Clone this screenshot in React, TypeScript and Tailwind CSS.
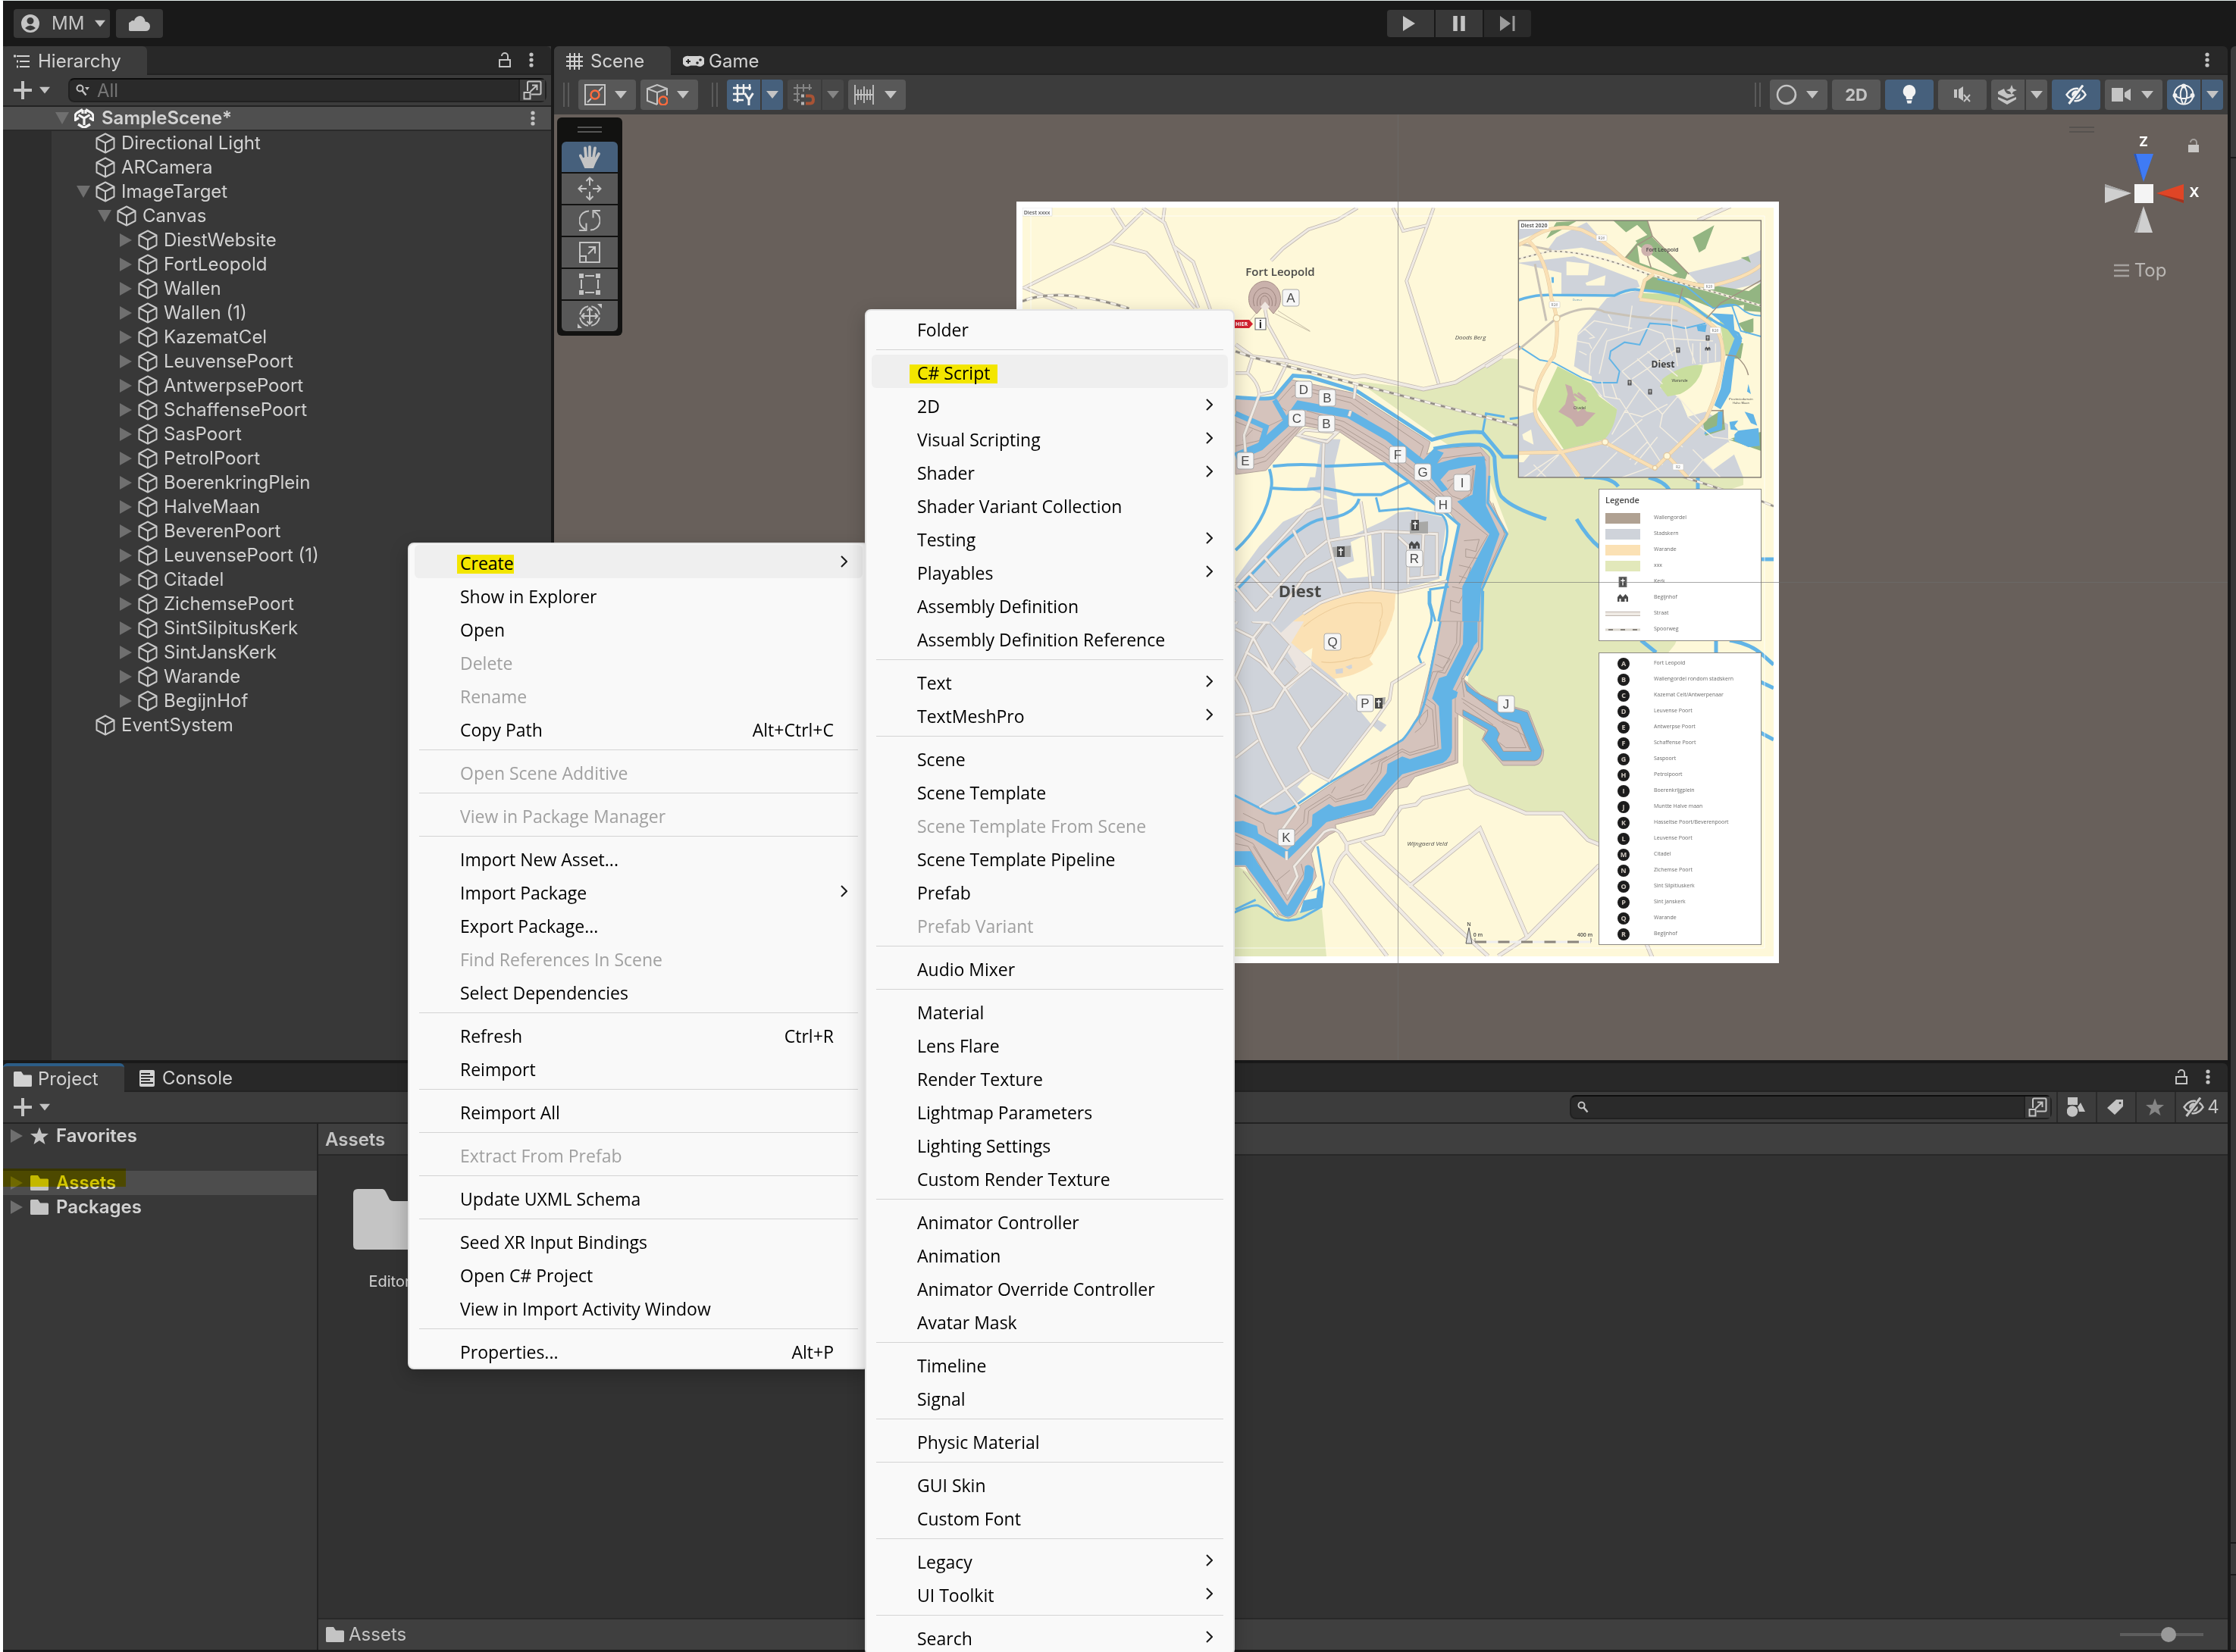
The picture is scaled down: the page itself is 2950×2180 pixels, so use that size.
import React from "react";
import clsx from "clsx";

type Kids = { children?: React.ReactNode };

/* ---------- icons ---------- */

function Icon({ w, h, vb, className, children }: Kids & { w: number; h: number; vb?: string; className?: string }) {
  return (
    <svg width={w} height={h} viewBox={vb ?? `0 0 ${w} ${h}`} className={clsx("shrink-0", className)} fill="none" stroke="currentColor" strokeWidth={2} aria-hidden="true">
      {children}
    </svg>
  );
}

const Caret = ({ className }: { className?: string }) => (
  <Icon w={16} h={10} className={className}>
    <path d="M0 0H16L8 10Z" fill="currentColor" stroke="none" />
  </Icon>
);

const Fold = ({ open }: { open?: boolean }) =>
  open ? (
    <Icon w={18} h={16} className="text-[#6f6f6f]">
      <path d="M0 0H18L9 16Z" fill="currentColor" stroke="none" />
    </Icon>
  ) : (
    <Icon w={16} h={18} className="text-[#6f6f6f]">
      <path d="M0 0L16 9L0 18Z" fill="currentColor" stroke="none" />
    </Icon>
  );

const Cube = () => (
  <Icon w={26} h={28}>
    <path d="M13 1.5L24.5 7.5V20.5L13 26.5L1.5 20.5V7.5ZM1.5 7.5L13 13.5L24.5 7.5M13 13.5V26.5" strokeLinejoin="round" />
  </Icon>
);

const Dots = () => (
  <Icon w={6} h={20}>
    <g fill="currentColor" stroke="none">
      <circle cx="3" cy="3" r="2.6" />
      <circle cx="3" cy="10" r="2.6" />
      <circle cx="3" cy="17" r="2.6" />
    </g>
  </Icon>
);

const Lock = () => (
  <Icon w={16} h={20}>
    <path d="M1 10H15V19H1ZM12 10V5A4 4 0 0 0 4 5" />
  </Icon>
);

const Plus = () => (
  <Icon w={24} h={24}>
    <path d="M12 0V24M0 12H24" strokeWidth={4} />
  </Icon>
);

const Folder = ({ className }: { className?: string }) => (
  <Icon w={24} h={20} className={className}>
    <path d="M0 1.5Q0 0 1.5 0H10L13 4.500H22.500Q24 4.500 24 6V18.500Q24 20 22.500 20H1.500Q0 20 0 18.500Z" fill="currentColor" stroke="none" />
  </Icon>
);

const Star = ({ className }: { className?: string }) => (
  <Icon w={24} h={24} className={className}>
    <path d="M12 0.500L15 8.800L24 9L17 14.400L19.500 23L12 18L4.500 23L7 14.400L0 9L9 8.800Z" fill="currentColor" stroke="none" />
  </Icon>
);

const OpenWindow = () => (
  <Icon w={25} h={26}>
    <path d="M6 14V3Q6 1.500 7.500 1.500H22Q23.500 1.500 23.500 3V17Q23.500 18.500 22 18.500H11M1.500 16H9.500V24.500H1.500ZM9.500 15L18 7M12 6.500H18.500V13" />
  </Icon>
);

const Magnifier = ({ caret }: { caret?: boolean }) => (
  <Icon w={18} h={16}>
    <circle cx="5.500" cy="5.500" r="4" />
    <path d="M8.500 8.500L13.500 14.500" strokeWidth={2.500} />
    {caret && <path d="M12 4H18L15 8Z" fill="currentColor" stroke="none" />}
  </Icon>
);

const EyeOff = () => (
  <Icon w={28} h={26}>
    <path d="M7.500 18.500Q3.500 16.500 1.500 13Q8 3.500 17 5M21.500 7Q25 9.500 26.500 13Q20 22.500 11.500 21" strokeWidth={2.500} />
    <path d="M9 15.500A5.500 5.500 0 0 1 16.500 8ZM13 18.500L19.500 11.500A5.500 5.500 0 0 1 13 18.500Z" fill="currentColor" stroke="none" />
    <path d="M23 0.500L4.500 25" strokeWidth={3} />
  </Icon>
);

/* ---------- shared controls ---------- */

const Grip = () => (
  <div className="flex h-8 w-2 shrink-0 justify-between">
    <div className="w-0.5 bg-[#5a5a5a]" />
    <div className="w-0.5 bg-[#5a5a5a]" />
  </div>
);

function Tool({ label, tone = "normal", className, children }: Kids & { label: string; tone?: "normal" | "active" | "off"; className?: string }) {
  return (
    <button
      aria-label={label}
      className={clsx(
        "flex h-10 shrink-0 items-center justify-center",
        tone === "normal" && "bg-[#585858] text-[#c4c4c4]",
        tone === "active" && "bg-[#46607c] text-[#f2f2f2]",
        tone === "off" && "bg-[#474747] text-[#858585]",
        className
      )}
    >
      {children}
    </button>
  );
}

function SplitTool({ label, tone, caretTone, children }: Kids & { label: string; tone?: "normal" | "active" | "off"; caretTone?: string }) {
  return (
    <div className="flex gap-0.5">
      <Tool label={label} tone={tone} className="w-11 rounded-l-sm">
        {children}
      </Tool>
      <Tool label={`${label} options`} tone={tone} className="w-7 rounded-r-sm">
        <Caret className={caretTone ?? "text-[#c4c4c4]"} />
      </Tool>
    </div>
  );
}

function Tab({ label, active, focused, icon, className }: { label: string; active?: boolean; focused?: boolean; icon: React.ReactNode; className: string }) {
  return (
    <button
      role="tab"
      aria-selected={!!active}
      className={clsx(
        "flex h-full items-center text-2xl text-[#d2d2d2]",
        active ? "rounded-t-md bg-[#3c3c3c]" : "border-b-2 border-[#232323] pt-1",
        focused ? "border-t-4 border-[#2c5d87]" : active && "pt-0.5",
        className
      )}
    >
      {icon}
      <span>{label}</span>
    </button>
  );
}

/* ---------- hierarchy ---------- */

type Node = { name: string; depth: 1 | 2 | 3; fold?: "open" | "closed" };

const nodes: Node[] = [
  { name: "Directional Light", depth: 1 },
  { name: "ARCamera", depth: 1 },
  { name: "ImageTarget", depth: 1, fold: "open" },
  { name: "Canvas", depth: 2, fold: "open" },
  ...[
    "DiestWebsite", "FortLeopold", "Wallen", "Wallen (1)", "KazematCel", "LeuvensePoort", "AntwerpsePoort",
    "SchaffensePoort", "SasPoort", "PetrolPoort", "BoerenkringPlein", "HalveMaan", "BeverenPoort",
    "LeuvensePoort (1)", "Citadel", "ZichemsePoort", "SintSilpitusKerk", "SintJansKerk", "Warande", "BegijnHof",
  ].map((name) => ({ name, depth: 3 as const, fold: "closed" as const })),
  { name: "EventSystem", depth: 1 },
];

function Hierarchy() {
  return (
    <section className="flex w-[723px] shrink-0 flex-col bg-[#383838]">
      <div className="flex h-[38px] items-stretch rounded-t-md bg-[#282828]">
        <Tab
          label="Hierarchy"
          active
          className="w-[190px] gap-2.5 pl-3.5"
          icon={
            <Icon w={22} h={18}>
              <path d="M4 2H21M8 9H21M8 16H21" strokeWidth={2.200} />
              <path d="M0 2H3M4 9H6M4 16H6" strokeWidth={3} />
            </Icon>
          }
        />
        <div className="flex grow items-center justify-end gap-6 border-b-2 border-[#232323] pr-[23px] text-[#c4c4c4]">
          <button aria-label="Lock"><Lock /></button>
          <button aria-label="Hierarchy menu"><Dots /></button>
        </div>
      </div>
      <div className="flex h-[42px] items-center border-b-2 border-[#232323] bg-[#3c3c3c] pl-3.5 pr-1.5 text-[#c4c4c4]">
        <button aria-label="Create object" className="flex w-[72px] items-center gap-2.5">
          <Plus />
          <Caret className="w-3.5" />
        </button>
        <label className="flex h-8 grow items-center rounded-lg border-2 border-[#212121] border-t-[#0d0d0d] bg-[#2a2a2a] pl-2">
          <Magnifier caret />
          <input aria-label="Search hierarchy" placeholder="All" className="ml-2.5 h-full min-w-0 grow bg-transparent text-2xl outline-none placeholder:text-[#767676]" />
          <span className="flex h-full items-center border-l-2 border-[#212121] bg-[#3c3c3c] px-1"><OpenWindow /></span>
        </label>
      </div>
      <div className="flex h-8 items-center border-b-2 border-[#2a2a2a] bg-[#4f4f4f] pl-16 text-[#d2d2d2]">
        <span className="flex w-7 justify-center"><Fold open /></span>
        <Icon w={26} h={26} className="ml-0.5 text-[#f4f4f4]">
          <path d="M11 1.500L4 5.500Q1 7.500 1 11V17M15 1.500L22 5.500Q25 7.500 25 11V17M5 21L11 24.500Q13 25.500 15 24.500L21 21M13 13V22M13 13L5.500 8.500M13 13L20.500 8.500M11 2V7M15 2V7M1.500 15L6 12.500M24.500 15L20 12.500" strokeWidth={3.200} />
        </Icon>
        <span className="ml-2.5 grow text-2xl leading-7 font-semibold">SampleScene*</span>
        <button aria-label="Scene menu" className="mr-[21px] text-[#c4c4c4]"><Dots /></button>
      </div>
      <div className="flex grow">
        <div className="w-16 shrink-0 bg-[#2d2d2d]" />
        <ul role="tree" aria-label="Scene objects" className="grow">
          {nodes.map((n) => (
            <li
              key={n.name}
              role="treeitem"
              aria-selected={false}
              className={clsx("flex h-8 items-center text-2xl text-[#d2d2d2]", n.depth === 1 && "pl-7", n.depth === 2 && "pl-14", n.depth === 3 && "pl-[84px]")}
            >
              <span className="flex w-7 justify-center">{n.fold && <Fold open={n.fold === "open"} />}</span>
              <span className="mr-2 ml-0.5 text-[#c8c8c8]"><Cube /></span>
              {n.name}
            </li>
          ))}
        </ul>
      </div>
    </section>
  );
}

/* ---------- map ---------- */

const WATER = "#62b4e6";
const TOWN = "#cfd3da";
const WALL = "#d5c3bc";
const GREEN = "#e2e8ba";
const CREAM = "#fef8d9";

const Roads = ({ d, w = 4 }: { d: string; w?: number }) => (
  <>
    <path d={d} stroke="#bfb6ae" strokeWidth={w + 1.500} />
    <path d={d} stroke="#efeae4" strokeWidth={w} />
  </>
);

const Orange = ({ d, w = 4 }: { d: string; w?: number }) => (
  <>
    <path d={d} stroke="#e2c9a0" strokeWidth={w + 1} />
    <path d={d} stroke="#fae0b5" strokeWidth={w} />
  </>
);

const Rail = ({ d, w = 2.500 }: { d: string; w?: number }) => (
  <>
    <path d={d} stroke="#c2bcb0" strokeWidth={w + 1.500} />
    <path d={d} stroke="#f6f2ea" strokeWidth={w} />
    <path d={d} stroke="#8f8a82" strokeWidth={w} strokeDasharray="6 8" />
  </>
);

const Church = ({ x, y, s = 1 }: { x: number; y: number; s?: number }) => (
  <g transform={`translate(${x} ${y}) scale(${s})`}>
    <rect x="-5" y="-7" width="10" height="14" fill="#4a4a4a" />
    <path d="M0 -5V5M-3 -2H3" stroke="#fff" strokeWidth="1.500" />
  </g>
);

const Houses = ({ x, y, s = 1 }: { x: number; y: number; s?: number }) => (
  <path transform={`translate(${x} ${y}) scale(${s})`} d="M-7 5V-1L-3.500 -5L0 -1L3.500 -5L7 -1V5H4.500V1H2.500V5H-2.500V1H-4.500V5Z" fill="#4a4a4a" stroke="none" />
);

const pins: [string, number, number][] = [
  ["A", 1703, 393], ["D", 1720, 514], ["B", 1751, 525], ["C", 1711, 552], ["B", 1750, 559], ["E", 1643, 608],
  ["F", 1844, 600], ["G", 1877, 623], ["I", 1929, 637], ["H", 1904, 666], ["R", 1866, 737], ["Q", 1758, 847],
  ["P", 1801, 928], ["J", 1987, 929], ["K", 1697, 1105],
];

const shields: [string, number, number][] = [
  ["R26", 2113, 314], ["R26", 2051, 402], ["R29", 2255, 378], ["R26", 2263, 436], ["R2", 2214, 616],
];

function MapDrawing() {
  return (
    <svg viewBox="1341 266 1006 1005" width={1006} height={1005} fill="none" className="block" aria-label="Map of Diest" role="img">
      <defs>
        <clipPath id="sheet"><rect x="1349" y="274" width="991" height="988" /></clipPath>
        <clipPath id="inset"><rect x="130" y="93" width="960" height="1017" /></clipPath>
      </defs>
      <rect x="1341" y="266" width="1006" height="1005" fill="#fff" />
      <g clipPath="url(#sheet)">
        <rect x="1349" y="274" width="991" height="988" fill={CREAM} />

        {/* green belt */}
        <path d="M1791 503L1878 514L1920 506L1975 475Q2000 470 2010 478L2300 560V640L2285 645L2210 850L2190 875L2110 1115L2095 1108L2062 1075L2013 1073L1947 1046L1938 1037L1930 1010V940L1955 780L1990 700L1960 620L1900 580Z" fill={GREEN} />
        <path d="M1628 1140L1655 1157L1680 1205L1744 1200L1750 1262H1628Z" fill={GREEN} />

        {/* southern half */}
        <g transform="translate(1620 780) scale(.33333)" className="[&_path]:[vector-effect:non-scaling-stroke]">
          <path d="M0 0H450L430 30L300 100L250 205L420 345L465 405L570 530L400 750L330 715L275 775L310 805L230 870L190 885L150 870L0 800Z" fill={TOWN} />
          <path d="M585 505L628 530L605 558L575 535ZM480 400L520 450L510 460L475 415Z" fill={TOWN} />
          <path d="M300 100Q450 10 560 0H665Q660 100 625 170L560 270L575 290Q500 340 420 347L330 275L335 225L300 245L250 205Z" fill="#fbe1b4" />
          <path d="M300 140Q400 60 480 45Q520 60 560 42Q600 40 608 90Q600 180 570 245Q540 265 500 265Q430 290 370 280" stroke="#eccb98" strokeWidth="1.200" />
          <path d="M425 310L455 305V325L428 328ZM465 300L490 290L492 305L480 310Z" fill={TOWN} />
          <path d="M290 90L310 105L250 205L330 275L330 300L230 400L220 380L270 300L165 120L210 165Z" fill="#ece5df" />
          <path d="M160 125L245 215L175 325L75 240ZM225 265L280 325L225 375L175 325Z" fill={TOWN} stroke="#bfb6ae" />
          <path d="M865 0L800 310L755 490L700 580L415 760L275 855L190 885L0 800V1090H70L80 1110L200 1280L240 1295L270 1280L350 1130L330 1040L345 1010L400 965L430 950L425 925L580 885L660 785L710 775L740 735L910 680V460L935 345L1005 230L1010 0Z" fill={WALL} stroke="#b3a49c" />
          <path d="M930 345L1000 410L1070 440L1190 475L1250 630Q1250 685 1215 690H1090L1005 590L1020 555L900 480V400Z" fill={WALL} stroke="#b3a49c" />
          <path d="M935 355Q960 400 1070 445L1185 480L1243 630Q1240 668 1215 672H1085L1010 585L1030 550L930 492V470L1060 540L1075 565L1065 590L1090 634H1200L1155 525L1090 505L945 395Z" fill={WATER} stroke="#a9988f" />
          <g stroke="#ad9c94">
            <path d="M925 425L1170 570L1195 630M930 440L1050 530M1075 600L1100 620H1180L1145 540L1085 515" />
            <path d="M895 0L925 40L918 210L860 325L830 320L785 425L820 450L832 620L720 650L690 635L610 680L605 720L540 805L425 835L405 815L320 870L315 920L232 1000L150 955L140 920L60 880" />
            <path d="M880 5L910 45L905 205L850 315L810 320L780 420M770 440L810 470L820 610L720 640L690 625L600 675L590 715L530 795L430 825L400 805L305 865L300 915L232 985" />
            <path d="M870 60L915 75L905 105L865 95M830 250L880 270L850 305L820 290M740 560Q800 520 790 470Q740 510 765 530M565 685L630 655M485 790L540 765M410 800L425 775" />
            <path d="M995 0L992 220L925 345L935 420M900 500V670L740 720L690 740L640 790L570 870L400 910" />
            <path d="M30 965L100 1000L235 1225L300 1120L290 1080M100 1010L190 1150L245 1105M195 1145L215 1190M30 1000L80 1010L190 1190M60 1110L200 1290" />
          </g>
          <path d="M920 0L935 40L930 210L865 335L835 345L808 425L835 455L845 625L720 665L690 655L632 685L628 720L545 825L420 855L400 843L335 885L332 930L235 1025L200 1005L120 960L115 930L60 910L0 915V955H30L100 980L235 1065L390 915L570 860L630 790L690 725L850 680Q885 660 887 620V430L905 420L910 400L890 390L975 215L988 200V0Z" fill={WATER} />
          <path d="M0 1030H90L120 1080L235 1245L300 1140L305 1090Q320 1075 340 1100L335 1150L262 1275Q240 1300 215 1280L70 1085H0Z" fill={WATER} />
          <path d="M865 0L800 330Q780 480 740 520Q710 570 690 590L400 760L280 840Q200 900 150 872L0 795" stroke={WATER} strokeWidth="3" />
          <path d="M1010 0L1005 230L945 335M795 0V50Q815 100 800 140L755 260L765 285" stroke={WATER} strokeWidth="3" />
          <path d="M0 1285Q90 1240 120 1245Q160 1265 185 1290Q230 1315 290 1295L370 1250L380 1160L355 1010M30 1260L110 1222" stroke={WATER} strokeWidth="3" />
          <path d="M300 1225L350 1215L355 1180L325 1190L370 1165L375 1250L285 1275Z" fill={WATER} />
          <Roads w={3} d="M30 35L100 120L165 125M100 -5L30 130M215 40L100 185L30 345M30 150L100 185L175 325L225 385M70 240L130 280L225 385L330 550L465 405L330 300M245 215L175 325M330 300L225 385L180 460Q140 485 30 490M30 345Q80 420 95 500Q130 620 230 790L280 855L215 945M330 550L280 620L330 715L125 855M120 590L30 660M235 1200L275 1130L262 1090L380 955Q420 930 445 960M330 715L400 750L570 530L640 430L650 365L780 285M450 0L430 30L300 105M232 1030V1065" />
          <Roads w={4} d="M445 960L470 1000V1030Q540 1120 850 1440M470 1030Q430 1060 408 1155L630 1445M470 1000L615 960L685 855L745 845L770 820L955 775L980 797L1180 880H1325L1425 985L1470 1003M530 990L1030 1445M715 1170L998 940L1185 1370M1070 1445L1185 1370L1470 1085" />
        </g>

        {/* northern half */}
        <g transform="translate(1340 260) scale(.44643 .35714)" className="[&_path]:[vector-effect:non-scaling-stroke]">
          <path d="M650 1568V1410L720 1290L790 1200L860 1160L900 1110L950 1120L960 1270L1090 1195L1130 1165L1180 1160L1270 1185L1275 1300L1255 1410L1130 1455L1000 1455L900 1500L820 1568Z" fill={TOWN} />
          <path d="M835 890L960 895L940 1000L950 1120L860 1075L870 1035H885L900 915Z" fill={TOWN} />
          <path d="M990 1275L1050 1240L1060 1400L980 1410L950 1370L1000 1345ZM1275 1180H1310L1275 1400L1250 1440L1260 1320Z" fill={CREAM} />
          <path d="M820 1568L850 1540L900 1500L1000 1460L1120 1462V1520L1110 1568Z" fill="#fbe1b4" />
          <path d="M870 1568Q960 1490 1030 1500L1080 1500Q1090 1540 1075 1568" stroke="#eccb98" />
          <path d="M770 745L815 675L1000 725L1225 905L1215 950L1250 930L1370 920L1400 960V1120L1455 1245L1380 1450L1375 1568H1250L1310 1210L1280 1160L1160 1050L1090 980L960 870L850 845L740 1010L650 1025V745Z" fill={WALL} stroke="#b3a49c" />
          <path d="M650 745H765L800 815L740 850L650 790Z" fill={WALL} stroke="#b3a49c" />
          <g stroke="#ad9c94">
            <path d="M800 790L770 765L820 695L1000 745L1205 920L1195 960M815 740L850 715L990 760L1040 805M860 790L970 830L1090 920L1200 1030L1270 1110M850 810L960 845L1085 940L1280 1130M840 830L960 860L1120 985L1395 1250L1310 1430" />
            <path d="M650 830L730 870L720 900L650 920M700 860L670 900M660 985L735 960L830 850M675 1000L740 975L840 850" />
            <path d="M1230 1005L1260 965L1375 945L1390 975M1330 1120L1350 1080L1355 1010L1275 1050M1290 1080L1345 1015L1340 1090L1315 1105" />
            <path d="M1410 1130L1445 1245L1375 1440L1365 1568M1325 1270L1370 1265L1360 1310L1330 1300V1330L1365 1335M1310 1360L1345 1370L1335 1410L1310 1400M1290 1440L1330 1450L1310 1500L1285 1490V1530L1315 1540" />
          </g>
          <path d="M650 960L722 922L802 832L838 768L985 802L1100 885L1205 990" stroke={WATER} strokeWidth="11" />
          <path d="M650 800L740 850L725 915M802 832L765 750" stroke={WATER} strokeWidth="7" />
          <path d="M1195 985L1235 930L1265 945L1245 985L1310 962L1385 958L1390 1000V1140L1430 1245L1375 1440L1370 1568H1320V1440L1400 1245L1305 1125L1350 1100L1360 990L1280 1010L1255 1045L1278 1080L1260 1090Z" fill={WATER} />
          <path d="M1290 1060L1352 1002L1345 1095L1318 1118L1290 1105L1275 1085Z" fill={WALL} stroke="#ad9c94" />
          <path d="M650 740Q740 750 765 740L820 660L870 665L1010 718L1230 897Q1330 860 1380 870L1440 960H1486" stroke={WATER} strokeWidth="5" />
          <path d="M760 995Q850 982 920 995L1090 985L1160 1050L1310 1210L1250 1568M750 1005Q760 1050 755 1075Q850 1085 905 1075Q960 1085 1000 1100H1080L1160 1055M755 1075Q740 1200 650 1305M1015 1115Q1000 1180 905 1190Q850 1200 735 1345L650 1455" stroke={WATER} strokeWidth="4" />
          <path d="M1065 1110L1075 1160L1160 1150L1260 1175Q1290 1210 1262 1330L1255 1400M1400 1030L1395 1130L1452 1245L1378 1450V1568M1280 1440L1225 1450V1500L1240 1568M1380 870L1390 800L1445 812M1460 820L1490 815" stroke={WATER} strokeWidth="3" />
          <path d="M1235 930Q1300 912 1370 915Q1400 920 1415 960Q1420 1100 1440 1112Q1470 1150 1568 1190" stroke={WATER} strokeWidth="5" />
          <Roads w={3} d="M285 40L325 120M375 40L440 95L465 175L540 410M440 40L435 90M375 55L280 170L210 220L25 335L180 415M280 170L385 205Q430 260 530 410M465 180L525 240L575 415" />
          <Roads w={3} d="M1010 40L950 85L865 120L790 190L755 235M1115 40L1145 125L1215 105M1235 40L1215 110L1155 310L1250 690" />
          <Roads w={3} d="M735 400L745 470L805 605L760 720L720 730M700 590L685 650Q720 690 720 730L675 880L680 960M650 650H685M1005 690L1000 745M990 790L985 810" />
          <Roads w={4} d="M650 545L700 590L800 605L1000 665L1030 660L1205 710L1300 685L1400 610L1486 545" />
          <Roads w={3} d="M910 910L905 1130L925 1270L965 1475M835 880L920 905L950 870L855 860ZM905 1140L860 1160L735 1330L650 1440M820 1230L860 1330M735 1330L780 1400M920 1270L850 1340L710 1530M925 1270L1085 1235L1245 1245V1400L1160 1410M1020 1125L1035 1245L1050 1450M1085 1240V1450M1130 1255L1160 1290V1430M1205 1245L1200 1405M1185 1165V1200L1215 1240M690 1390L760 1480M650 1440L710 1530M935 1340L860 1390L760 1568M850 1540L900 1500Q980 1460 1050 1450L1130 1460L1275 1420" />
          <Rail d="M20 385Q130 330 335 412" />
          <Rail d="M650 570L700 592L1486 845" />
          <path d="M690 460L720 415M775 420L870 495M765 430L870 497" stroke="#c8bfa8" />
        </g>

        {/* fort */}
        <path d="M1650 405A21 23 0 1 1 1687 405L1680 414L1669 401L1658 414Z" fill="#c9b1ab" stroke="#a58d87" />
        <path d="M1655 404A15 17 0 1 1 1682 404M1659 404A10 13 0 1 1 1678 404M1663 403A6 9 0 1 1 1674 403" stroke="#9d857f" />
        <path d="M1669 398L1675 405L1669 411L1663 405Z" fill="#efe6e0" />

        {/* waters beside the legend */}
        <path d="M2080 685Q2095 710 2110 722M2165 845L2185 861M2264 845V861M2282 845Q2310 850 2324 863L2340 877M2323 738H2340M2323 900L2340 908" stroke={WATER} strokeWidth="5" />
        <path d="M2323 967L2340 976M2090 630Q2125 628 2135 642M2175 630Q2195 635 2202 646M2240 630V645" stroke={WATER} strokeWidth="5" />
        <Rail d="M2220 629L2275 647M2323 661L2340 668" w={2} />
        <Roads w={4} d="M2240 291L2283 272M1982 470L1960 484M2172 1245L2180 1264" />

        {/* inset map */}
        <g transform="translate(1960 260) scale(.33333)">
          <g clipPath="url(#inset)" className="[&_path]:[vector-effect:non-scaling-stroke]">
            <rect x="130" y="93" width="960" height="1017" fill={CREAM} />
            <path d="M130 260L350 235L600 330L610 355L530 385H300V300L130 262ZM240 215L280 160L400 100L470 180L545 240L380 200L250 215ZM480 400L600 370L730 420L850 460L940 560V650L870 660Q720 700 700 740L770 800L800 870L870 850L960 900V960L1020 1110H370L300 1000L470 960L520 840L420 760V710L350 670L365 540ZM130 870L195 850L290 1000L360 1110H130Z" fill={TOWN} />
            <path d="M800 300L1000 250L1090 210V340L960 370L840 340ZM130 93H250L240 130L130 170Z" fill={TOWN} />
            <path d="M320 255L410 265L405 310L320 310ZM395 340L475 310L470 350L400 350ZM690 755L770 790L800 870L880 790L900 690L850 660L770 700ZM860 1040L960 970L1010 1000L900 1080ZM130 1020H175L150 1050H130ZM145 940L180 920L190 980L150 960Z" fill={CREAM} />
            <path d="M505 93H640L660 160L800 300L790 325L660 300L550 240L600 180ZM820 160L905 112L870 205L845 220ZM640 310L780 330L1090 380V420L900 440L800 400L620 365ZM860 890L940 840L948 920L870 945ZM1030 380L1090 340V455L1020 450ZM1000 500L1060 480V535L1030 540ZM280 100L360 95L240 165ZM1010 240L1040 235L1050 260ZM980 570L1020 580L1010 640L970 640ZM960 960L1090 1005V930L990 950Z" fill="#93b582" />
            <path d="M555 140L600 110L640 150L580 180ZM600 190L760 300L740 308L610 260Z" fill={CREAM} />
            <path d="M285 670L420 740L450 790L520 840Q510 920 470 960L310 1000L205 840ZM700 720Q780 660 860 665Q850 740 770 780L720 790L690 750ZM615 380L760 385L900 480L890 500L750 420L610 405ZM925 480L975 470L990 600L950 630Z" fill="#c9de9e" />
            <path d="M315 740L340 750L350 790L400 850L435 855L385 905L360 910L340 880L288 850L315 820L325 780Z" fill="#c8aca9" />
            <path d="M350 780L400 810M365 775L395 800" stroke="#c8aca9" strokeWidth="3" />
            <path d="M345 810L365 850L395 830L370 805Z" fill="#c9de9e" />
            <path d="M130 408Q200 385 260 388L510 390Q570 360 610 368Q720 375 780 400L870 470L920 500L1000 540L1010 560L960 650V740L925 830" stroke={WATER} strokeWidth="3.500" />
            <path d="M680 325L790 350L900 440L975 430L1010 530L1090 552M905 440Q980 410 1010 440Q1040 470 1090 470M130 590L215 645L270 655L380 715L440 735L520 735L530 690L490 640L495 610L550 575L610 585L650 500L720 505L790 520L870 500" stroke={WATER} strokeWidth="2" />
            <path d="M890 460L980 465L985 530L1015 570L985 640L970 770L930 840L905 825L930 760L950 650L985 560L940 500ZM920 850H940L935 920L865 940L870 925L915 905ZM985 940L1000 925L1080 915L1085 985L1040 990L985 965ZM1025 850L1060 860L1075 905L1050 895ZM965 890L1000 885L985 905L1000 925L970 920ZM835 510L875 505L870 535L840 530ZM1040 740L1050 780L1035 770ZM260 317H270V340H262Z" fill={WATER} />
            <path d="M130 245L250 215Q400 210 640 305L900 375L1090 430" stroke="#f4eedd" strokeWidth="3" />
            <path d="M130 245L250 215Q400 210 640 305L900 375L1090 430" stroke="#8a857c" strokeWidth="1.500" strokeDasharray="3 4" />
            <path d="M640 93L660 155L805 305M660 155L600 190L555 240M640 230L655 280M780 360L765 420M870 485L930 420L1090 330M890 845H940V900M950 625L990 630Q1030 660 1040 705" stroke="#a19382" strokeWidth="1.500" />
            <path d="M130 605L280 480Q400 420 470 455L600 475L760 490M130 748L195 768M195 265L240 490M130 185L160 190L260 210" stroke="#c9c2b6" strokeWidth="3" />
            <g stroke="#f3eddf" strokeWidth="1.500">
              <path d="M365 545L430 490L580 520M390 520L430 555L410 560M360 570L410 580L420 600M370 610L400 625M485 465L500 490M410 700L415 620L480 520M450 700L480 570L640 520L700 540L740 630M580 430L565 530M740 430L735 500L760 670M650 470L700 430M790 510L805 590L830 660M540 690L720 560L900 570M580 720L760 600M640 610L760 710M600 640L700 740M540 690L610 760L550 850L620 870L720 820M470 790L530 800L700 1060M420 740L460 790M460 730L470 790M500 740L520 800M610 760L700 860L690 910L780 990M700 860L760 790L860 900M640 970L570 1040M550 850L500 940M480 990L620 880M590 1060L680 950M820 580V660M850 575V655M880 575V655M910 580V650M200 1110L290 1020M240 1110L190 1060M150 1110L300 1010M420 1110L520 1010M650 1070L540 1110M820 1000L900 1080L930 1110M800 870L900 950L980 960M800 1110L860 1040" />
            </g>
            <Orange w={4} d="M130 190L170 170Q260 100 380 130Q470 170 540 240Q600 280 700 305Q840 360 900 350Q1030 320 1090 270M165 170Q240 230 260 400Q300 500 270 630Q200 720 195 800Q190 860 210 890L370 1105M610 400L630 330L665 305M610 405L760 425Q860 470 910 520Q950 570 935 690Q910 800 870 880L720 1025L670 1075L470 970L300 1010L130 1013M720 1025L800 1110" />
            <g fill={CREAM} stroke="#e2c9a0" strokeWidth="4">
              <circle cx="281" cy="480" r="13" /><circle cx="473" cy="970" r="12" /><circle cx="718" cy="1025" r="13" /><circle cx="670" cy="1072" r="9" />
            </g>
            <circle cx="640" cy="210" r="24" fill="#cdb1ad" />
          </g>
          <rect x="130" y="93" width="960" height="1017" stroke="#77716a" strokeWidth="4" />
        </g>
        <rect x="2005" y="292" width="38" height="10" fill="#fff" />
        <g fontFamily="Open Sans, sans-serif" fill="#3d3d3d" textAnchor="middle">
          <text x="2024" y="300" fontSize="7" fontWeight="600">Diest 2020</text>
          <text x="2193" y="332" fontSize="7" fontWeight="600">Fort Leopold</text>
          <text x="2194" y="485" fontSize="12" fontWeight="700">Diest</text>
          <text x="2216" y="504" fontSize="5">Warande</text>
          <text x="2084" y="540" fontSize="5">Citadel</text>
          <text x="2297" y="528" fontSize="4">Provinciedomein</text>
          <text x="2297" y="533" fontSize="4">Halve Maan</text>
          <text x="2081" y="397" fontSize="4" fill="#5b8fb0">Demer</text>
        </g>
        {shields.map(([t, x, y]) => (
          <g key={`${x}`}>
            <rect x={x - 7} y={y - 4} width="14" height="8" rx="1" fill="#fff" stroke="#c7c2ba" strokeWidth=".5" />
            <text x={x} y={y + 2} fontSize="5" textAnchor="middle" fill="#777" fontFamily="Open Sans, sans-serif">{t}</text>
          </g>
        ))}
        <Church x={2253} y={446} s={0.5} />
        <Church x={2214} y={462} s={0.5} />
        <Church x={2150} y={505} s={0.5} />
        <Church x={2177} y={517} s={0.5} />
        <Houses x={2253} y={460} s={0.5} />

        {/* landmarks and captions */}
        <path d="M1758 722L1782 720V735H1760ZM1860 690L1884 688V704H1860Z" fill="#a8a8a6" />
        <Church x={1769} y={728} />
        <Church x={1867} y={693} />
        <path d="M1819 921L1828 920L1827 929L1820 932Z" fill="#a8a8a6" />
        <Church x={1819} y={928} />
        <Houses x={1866} y={719} />
        <path d="M1628 422H1648L1653 427.500L1648 433H1628Z" fill="#d3222f" />
        <rect x="1656" y="420" width="14" height="15" fill="#fff" stroke="#666" />
        <g fontFamily="Open Sans, sans-serif" fill="#4a4a48" textAnchor="middle">
          <text x="1638" y="430" fontSize="7" fontWeight="700" fill="#fff">HIER</text>
          <text x="1663" y="433" fontSize="14" fontWeight="700" fill="#222">i</text>
          <text x="1689" y="364" fontSize="15" fontWeight="600">Fort Leopold</text>
          <text x="1715" y="788" fontSize="22" fontWeight="700">Diest</text>
          <text x="1940" y="448" fontSize="8" fontStyle="italic">Doods Berg</text>
          <text x="1883" y="1116" fontSize="8" fontStyle="italic">Wijngaerd Veld</text>
          <text x="1938" y="1222" fontSize="7" fontWeight="600">N</text>
          <text x="1950" y="1236" fontSize="7" fontWeight="600">0 m</text>
          <text x="2091" y="1236" fontSize="7" fontWeight="600">400 m</text>
        </g>
        <path d="M1938 1224L1942 1245H1934Z" fill="#ddd" stroke="#555" />
        <path d="M1946 1238V1243H2099V1238" stroke="#777" />
        <path d="M1946 1243H2099" stroke="#eee" strokeWidth="3" />
        <path d="M1946 1243H2099" stroke="#8a857c" strokeWidth="3" strokeDasharray="15 15.500" />
        <rect x="1349" y="274" width="39" height="11" fill="#fff" stroke="#ccc" strokeWidth=".5" />
        <text x="1368" y="283" fontSize="7" fontWeight="600" textAnchor="middle" fill="#555" fontFamily="Open Sans, sans-serif">Diest xxxx</text>
        <path d="M1388 285H2328V1251H1349M1360 285V1251" stroke="#fff" strokeOpacity=".8" />
      </g>
      {pins.map(([t, x, y]) => (
        <g key={`${t}${x}`}>
          <rect x={x - 11} y={y - 11} width="22" height="22" rx="3" fill="#f6f6f6" stroke="#a9a9a9" />
          <text x={x} y={y + 6} fontSize="17" textAnchor="middle" fill="#4a4a4a" fontFamily="Liberation Sans, sans-serif">{t}</text>
        </g>
      ))}
    </svg>
  );
}

const legend: [string, React.ReactNode][] = [
  ["Wallengordel", <span className="h-3.5 w-full bg-[#b0a192]" />],
  ["Stadskern", <span className="h-3.5 w-full bg-[#cfd3da]" />],
  ["Warande", <span className="h-3.5 w-full bg-[#fbe1b4]" />],
  ["xxx", <span className="h-3.5 w-full bg-[#e2e8ba]" />],
  ["Kerk", <Icon w={14} h={14} vb="-7 -7 14 14"><Church x={0} y={0} s={0.9} /></Icon>],
  ["Begijnhof", <Icon w={16} h={12} vb="-8 -6 16 12"><Houses x={0} y={0} /></Icon>],
  ["Straat", <span className="h-1.5 w-full border-y border-[#bfb6ae] bg-[#efeae4]" />],
  ["Spoorweg", <Icon w={46} h={4}><path d="M0 2H46" stroke="#dcd8d0" strokeWidth={3} /><path d="M4 2H46" stroke="#85807a" strokeWidth={2} strokeDasharray="6 10" /></Icon>],
];

const places = [
  "Fort Leopold", "Wallengordel rondom stadskern", "Kazemat Celt/Antwerpenaar", "Leuvense Poort", "Antwerpse Poort",
  "Schaffense Poort", "Saspoort", "Petrolpoort", "Boerenkrijgplein", "Muntte Halve maan", "Hasseltse Poort/Beverenpoort",
  "Leuvense Poort", "Citadel", "Zichemse Poort", "Sint Silpitiuskerk", "Sint Janskerk", "Warande", "Begijnhof",
];

function MapSheet() {
  return (
    <div className="absolute top-[115px] left-[610px] h-[1005px] w-[1006px] font-['Open_Sans',sans-serif] text-[7px] text-[#6a6a6a]">
      <MapDrawing />
      <div className="absolute top-[379px] left-[768px] w-[215px] border border-[#8d8a84] bg-white pb-1 pl-2">
        <h3 className="h-[27px] pt-0.5 text-[11px] leading-6 font-semibold text-[#444]">Legende</h3>
        {legend.map(([t, mark]) => (
          <div key={t} className="flex h-[21px] items-center">
            <span className="flex w-[46px] justify-center">{mark}</span>
            <span className="ml-[18px]">{t}</span>
          </div>
        ))}
      </div>
      <ol className="absolute top-[595px] left-[768px] w-[215px] border border-[#8d8a84] bg-white py-[3px] pl-6">
        {places.map((t, i) => (
          <li key={i} className="flex h-[21px] items-center">
            <span className="flex size-4 items-center justify-center rounded-full bg-[#1c1c1c] text-[9px] font-bold text-[#cfc8c0]">{String.fromCharCode(65 + i)}</span>
            <span className="ml-8">{t}</span>
          </li>
        ))}
      </ol>
    </div>
  );
}

/* ---------- scene ---------- */

const handTools: [string, React.ReactNode][] = [
  ["View tool", <Icon w={28} h={30}><path d="M9 29L5 20L1.800 13.500M9.500 20L8 3.500M14 18V2M18.500 19L21 3.500M20 22L26 11" strokeWidth={3.800} strokeLinecap="round" /><path d="M4 17L8 15H20L24 17L19 30H9Z" fill="currentColor" stroke="none" /></Icon>],
  ["Move tool", <Icon w={32} h={32}><path d="M16 12V2M11.500 6L16 1.500L20.500 6M16 20V30M11.500 26L16 30.500L20.500 26M12 16H2M6 11.500L1.500 16L6 20.500M20 16H30M26 11.500L30.500 16L26 20.500" /></Icon>],
  ["Rotate tool", <Icon w={28} h={28}><path d="M13 1.500A12.500 12.500 0 0 0 8 25.500M15 26.500A12.500 12.500 0 0 0 20 2.500M0 27H9.500V17.500M28 1H18.500V10.500" /></Icon>],
  ["Scale tool", <Icon w={28} h={28}><path d="M1 1H27V27H1ZM1 19H9V27M12 16L20.500 7.500M12.500 7H21V15.500" /></Icon>],
  ["Rect tool", <Icon w={28} h={28}><path d="M8 3H20M8 25H20M3 8V20M25 8V20" /><path d="M0 0H6V6H0ZM22 0H28V6H22ZM0 22H6V28H0ZM22 22H28V28H22Z" fill="currentColor" stroke="none" /></Icon>],
  ["Transform tool", <Icon w={32} h={32}><circle cx="16" cy="16" r="13" strokeDasharray="16 4.420" strokeDashoffset="-2" /><path d="M16 6V26M12.500 9L16 5.500L19.500 9M12.500 23L16 26.500L19.500 23M6 16H26M9 12.500L5.500 16L9 19.500M23 12.500L26.500 16L23 19.500" /><path d="M26 0H32V6ZM0 26V32H6Z" fill="currentColor" stroke="none" /></Icon>],
];

function SceneToolbar() {
  return (
    <div className="flex h-[52px] items-center bg-[#3c3c3c] pr-1.5 pl-3">
      <Grip />
      <div className="ml-3 flex gap-1.5">
        <Tool label="Pivot mode" className="w-[76px] gap-3 rounded-sm pr-1">
          <Icon w={28} h={28}>
            <path d="M1 1H27V27H1ZM4 24L9 19M19 9L24 4" />
            <circle cx="14" cy="14" r="5.500" stroke="#ff6b3d" strokeWidth={2.500} />
          </Icon>
          <Caret />
        </Tool>
        <Tool label="Handle rotation" className="w-[76px] gap-3 rounded-sm pr-1">
          <Icon w={28} h={28}>
            <path d="M14 27L1 22V6L14 1L27 6V15M1 6L14 11L27 6M14 11V27" />
            <circle cx="22" cy="22" r="5.500" stroke="#ff6b3d" strokeWidth={2.500} />
          </Icon>
          <Caret />
        </Tool>
      </div>
      <div className="ml-[18px]"><Grip /></div>
      <div className="ml-3 flex gap-1.5">
        <SplitTool label="Grid visibility" tone="active">
          <Icon w={28} h={28}>
            <path d="M6 0V24M14 0V14M22 0V8M0 5H24M0 13H13M0 21H14" strokeWidth={2.500} />
            <path d="M15.500 12L21 20.500V28M26.500 12L21 20.500" strokeWidth={3} />
          </Icon>
        </SplitTool>
        <SplitTool label="Grid snapping" tone="off" caretTone="text-[#858585]">
          <Icon w={28} h={28}>
            <path d="M5 0V24M13 0V10M21 0V8M0 5H24M0 13H8M0 21H8" />
            <path d="M16 15.500H22Q26 15.500 26 20.500Q26 25.500 22 25.500H16" stroke="#a85335" strokeWidth={4} />
            <path d="M10 13.500H14V17.500H10ZM10 23.500H14V27.500H10Z" fill="#b5b5b5" stroke="none" />
          </Icon>
        </SplitTool>
        <Tool label="Snap increment" className="w-[76px] gap-3.5 rounded-sm pr-1">
          <Icon w={26} h={26}>
            <path d="M1 0V26M25 0V26M13 2V24M5 6V20M9 6V20M17 6V20M21 6V20M1 13H25" strokeWidth={1.800} />
          </Icon>
          <Caret />
        </Tool>
      </div>
      <div className="grow" />
      <Grip />
      <div className="ml-3 flex gap-1.5">
        <Tool label="Draw mode" className="w-[76px] gap-3 rounded-sm pr-1">
          <Icon w={28} h={28}>
            <circle cx="14" cy="14" r="12" strokeWidth={2.500} />
            <path d="M4 20A12 12 0 1 0 22 4.500A11.500 11.500 0 0 1 4 20Z" fill="currentColor" stroke="none" />
          </Icon>
          <Caret />
        </Tool>
        <Tool label="2D view" className="w-16 rounded-sm text-[22px] font-bold">2D</Tool>
        <Tool label="Scene lighting" tone="active" className="w-16 rounded-sm">
          <Icon w={18} h={26}>
            <path d="M9 0A8.500 8.500 0 0 1 13.500 15.500L13 19H5L4.500 15.500A8.500 8.500 0 0 1 9 0ZM5.500 20.500H12.500L11.500 24.500H6.500Z" fill="currentColor" stroke="none" />
          </Icon>
        </Tool>
        <Tool label="Scene audio" className="w-16 rounded-sm">
          <Icon w={24} h={22}>
            <path d="M1 4H5V15H1ZM7 4L13 0V19L7 15Z" fill="currentColor" stroke="none" />
            <path d="M14 11L22 20M22 11L14 20" />
          </Icon>
        </Tool>
        <SplitTool label="Scene effects">
          <Icon w={26} h={26}>
            <path d="M0 9L8 5Q10 14 20 12L22 14L12 18L0 12Z" fill="currentColor" stroke="none" />
            <path d="M18 0L20 5L25 7L20 9L18 13L16 9L11 7L16 5ZM0 16L12 21L24 16V19L12 26L0 19Z" fill="currentColor" stroke="none" />
          </Icon>
        </SplitTool>
        <Tool label="Hidden objects" tone="active" className="w-16 rounded-sm"><EyeOff /></Tool>
        <Tool label="Camera settings" className="w-[76px] gap-3.5 rounded-sm pr-1">
          <Icon w={25} h={18}>
            <path d="M0 0H15V18H0ZM17 6L25 1V17L17 12Z" fill="currentColor" stroke="none" />
          </Icon>
          <Caret />
        </Tool>
        <SplitTool label="Gizmos" tone="active">
          <Icon w={30} h={30}>
            <circle cx="15" cy="15" r="12.500" />
            <path d="M3 16Q15 24 27 16M15 3Q23 12 16 27M15 3Q7 12 14 27" />
            <circle cx="15" cy="3.500" r="3" fill="currentColor" stroke="none" />
            <circle cx="3.500" cy="16" r="3" fill="currentColor" stroke="none" />
            <circle cx="26.500" cy="16" r="3" fill="currentColor" stroke="none" />
          </Icon>
        </SplitTool>
      </div>
    </div>
  );
}

function OrientationGizmo() {
  return (
    <div className="absolute top-2.5 right-0 h-60 w-[220px]">
      <svg width={220} height={240} viewBox="2719 161 220 240" fill="none" aria-hidden="true">
        <path d="M2730 168H2763M2730 174H2763" stroke="#56524f" strokeWidth="2" />
        <path d="M2815 203H2841L2828 240Z" fill="#3f7bf5" />
        <path d="M2815 203H2818L2828 240Z" fill="#2b56b5" />
        <path d="M2881 243V268L2845 255Z" fill="#e04526" />
        <path d="M2881 264V268L2845 255Z" fill="#9e3320" />
        <path d="M2777 243V268L2812 255Z" fill="#cfcfcf" />
        <path d="M2777 243V247L2812 255Z" fill="#a8a8a8" />
        <path d="M2816 307H2840L2828 272Z" fill="#cfcfcf" />
        <path d="M2816 307H2820L2828 272Z" fill="#a8a8a8" />
        <rect x="2816" y="243" width="25" height="25" fill="#f4f4f4" />
        <path d="M2887 191H2901V201H2887Z" fill="#c9c7c5" />
        <path d="M2898 191V188A4 4 0 0 0 2890 188" stroke="#a5a19e" strokeWidth="2" />
        <path d="M2789 350H2809M2789 357H2809M2789 364H2809" stroke="#a5a19e" strokeWidth="2.500" />
        <g fontFamily="Inter, sans-serif" textAnchor="middle">
          <text x="2828" y="193" fontSize="18" fontWeight="700" fill="#fff">Z</text>
          <text x="2895" y="260" fontSize="18" fontWeight="700" fill="#fff">X</text>
          <text x="2837" y="365" fontSize="24" fill="#bab7b4">Top</text>
        </g>
      </svg>
    </div>
  );
}

function Scene() {
  return (
    <section className="flex min-w-0 grow flex-col">
      <div className="flex h-[38px] items-stretch rounded-t-md bg-[#282828]">
        <Tab
          label="Scene"
          active
          className="w-[154px] gap-2.5 pl-4"
          icon={<Icon w={22} h={22}><path d="M5 0V22M11 0V22M17 0V22M0 5H22M0 11H22M0 17H22" /></Icon>}
        />
        <Tab
          label="Game"
          className="gap-1.5 pl-4"
          icon={
            <Icon w={28} h={16}>
              <path d="M8 1H20A7 7 0 1 1 18 13.500H10A7 7 0 1 1 8 1Z" fill="currentColor" stroke="none" />
              <path d="M4 8H10M7 5V11" stroke="#282828" />
              <circle cx="23" cy="6" r="1.800" fill="#282828" stroke="none" />
              <circle cx="19" cy="10" r="1.800" fill="#282828" stroke="none" />
            </Icon>
          }
        />
        <div className="flex grow items-center justify-end border-b-2 border-[#232323] pr-6 text-[#c4c4c4]">
          <button aria-label="Scene tab menu"><Dots /></button>
        </div>
      </div>
      <SceneToolbar />
      <div className="relative grow overflow-hidden bg-[#68605b]">
        <MapSheet />
        <div className="absolute inset-y-0 left-[1113px] w-px bg-[#6e6e6e]/60" />
        <div className="absolute inset-x-0 top-[617px] h-px bg-[#6e6e6e]/60" />
        <div role="toolbar" aria-label="Tools" className="absolute top-1 left-1 flex w-[86px] flex-col gap-0.5 rounded-md bg-[#121211] p-1.5">
          <div className="mx-auto mt-1.5 mb-2.5 h-2 w-8 border-y-2 border-[#555]" />
          {handTools.map(([label, icon], i) => (
            <Tool key={label} label={label} className={clsx("w-full", i === 0 && "rounded-t-md !bg-[#46607c]", i === 5 && "rounded-b-md")}>
              {icon}
            </Tool>
          ))}
        </div>
        <OrientationGizmo />
      </div>
    </section>
  );
}

/* ---------- project ---------- */

const toolCell = "flex h-full w-[52px] items-center justify-center border-l-2 border-[#2a2a2a] pr-0.5";

function Project() {
  return (
    <section className="flex min-h-0 flex-[774_1_0px] flex-col">
      <div className="flex h-[38px] shrink-0 items-stretch rounded-t-md bg-[#282828]">
        <Tab label="Project" active focused className="w-40 gap-2 pl-3.5" icon={<Folder />} />
        <Tab
          label="Console"
          className="gap-2.5 pl-5"
          icon={
            <Icon w={20} h={22}>
              <rect width="20" height="22" rx="2" fill="currentColor" stroke="none" />
              <path d="M2 5H14M2 9H18M2 13H14M2 17H18" stroke="#282828" />
            </Icon>
          }
        />
        <div className="flex grow items-center justify-end gap-6 border-b-2 border-[#232323] pr-[23px] text-[#c4c4c4]">
          <button aria-label="Lock"><Lock /></button>
          <button aria-label="Project menu"><Dots /></button>
        </div>
      </div>
      <div className="flex h-[42px] shrink-0 items-center border-b-2 border-[#232323] bg-[#3c3c3c] pl-3.5 text-[#c4c4c4]">
        <button aria-label="Create asset" className="flex items-center gap-2.5">
          <Plus />
          <Caret className="w-3.5" />
        </button>
        <div className="grow" />
        <label className="mr-1.5 flex h-8 w-[636px] items-center rounded-lg border-2 border-[#212121] border-t-[#0d0d0d] bg-[#2a2a2a] pl-2">
          <Magnifier />
          <input aria-label="Search assets" className="h-full min-w-0 grow bg-transparent text-2xl outline-none" />
          <span className="flex h-full items-center border-l-2 border-[#212121] bg-[#3c3c3c] px-1"><OpenWindow /></span>
        </label>
        <button aria-label="Search by type" className={toolCell}>
          <Icon w={24} h={26}>
            <path d="M1 0H14V10H1ZM18 7L24 19H15.500L13 14Z" fill="currentColor" stroke="none" />
            <circle cx="7" cy="18.500" r="8" fill="currentColor" stroke="#3c3c3c" strokeWidth={1.500} />
          </Icon>
        </button>
        <button aria-label="Search by label" className={toolCell}>
          <Icon w={22} h={22}>
            <path d="M0 12L12 1H21V10L10 21ZM17 4A1.500 1.500 0 1 0 17 7A1.500 1.500 0 1 0 17 4" fill="currentColor" fillRule="evenodd" stroke="none" />
          </Icon>
        </button>
        <button aria-label="Save search" className={toolCell}><Star className="text-[#858585]" /></button>
        <button className="flex h-full w-[70px] items-center justify-center gap-1 border-l-2 border-[#2a2a2a] pr-0.5 text-2xl" aria-label="4 hidden packages">
          <EyeOff />
          4
        </button>
      </div>
      <div className="flex min-h-0 grow">
        <ul role="tree" aria-label="Project folders" className="flex w-[416px] shrink-0 flex-col border-r-2 border-[#232323] bg-[#383838] text-2xl font-semibold text-[#d2d2d2]">
          <li role="treeitem" aria-selected={false} className="mb-[30px] flex h-8 items-center pl-2.5">
            <Fold />
            <Star className="mr-2.5 ml-2.5 text-[#c4c4c4]" />
            Favorites
          </li>
          <li role="treeitem" aria-selected className="relative flex h-8 items-center bg-[#4d4d4d] pl-2.5">
            <Fold />
            <Folder className="mr-2.5 ml-2.5 text-[#c4c4c4]" />
            Assets
            <span className="absolute -top-[3px] -left-[3px] h-6 w-[165px] bg-[#fff000] mix-blend-multiply" />
          </li>
          <li role="treeitem" aria-selected={false} className="flex h-8 items-center pl-2.5">
            <Fold />
            <Folder className="mr-2.5 ml-2.5 text-[#c4c4c4]" />
            Packages
          </li>
        </ul>
        <div className="flex min-w-0 grow flex-col bg-[#323232]">
          <div className="flex h-[42px] shrink-0 items-center border-b-2 border-[#282828] bg-[#3f3f3f] pt-0.5 pl-[9px] text-2xl font-semibold text-[#c4c4c4]">Assets</div>
          <div className="grow pt-11 pl-[46px]">
            <figure className="flex w-24 flex-col items-center">
              <Icon w={96} h={80} className="text-[#c4c4c4]">
                <path d="M0 6Q0 0 6 0H38Q41 0 43 4L48 14Q50 16 53 16H90Q96 16 96 22V74Q96 80 90 80H6Q0 80 0 74Z" fill="currentColor" stroke="none" />
              </Icon>
              <figcaption className="mt-7 text-xl leading-7 text-[#d2d2d2]">Editor</figcaption>
            </figure>
          </div>
          <div className="flex h-[42px] shrink-0 items-center border-t-2 border-[#282828] bg-[#3f3f3f] pr-8 pl-2.5 text-2xl text-[#c4c4c4]">
            <Folder />
            <span className="ml-1.5 grow">Assets</span>
            <input
              type="range"
              aria-label="Icon size"
              defaultValue={60}
              className="h-5 w-[110px] appearance-none bg-transparent [&::-webkit-slider-runnable-track]:h-1 [&::-webkit-slider-runnable-track]:bg-[#5e5e5e] [&::-webkit-slider-thumb]:-mt-2 [&::-webkit-slider-thumb]:size-5 [&::-webkit-slider-thumb]:appearance-none [&::-webkit-slider-thumb]:rounded-full [&::-webkit-slider-thumb]:bg-[#999]"
            />
          </div>
        </div>
      </div>
    </section>
  );
}

/* ---------- context menus ---------- */

type Item = { label: string; off?: boolean; sub?: boolean; keys?: string; marked?: string };

const assetMenu: Item[][] = [
  [
    { label: "Create", sub: true, marked: "-ml-1 pl-1" },
    { label: "Show in Explorer" },
    { label: "Open" },
    { label: "Delete", off: true },
    { label: "Rename", off: true },
    { label: "Copy Path", keys: "Alt+Ctrl+C" },
  ],
  [{ label: "Open Scene Additive", off: true }],
  [{ label: "View in Package Manager", off: true }],
  [
    { label: "Import New Asset..." },
    { label: "Import Package", sub: true },
    { label: "Export Package..." },
    { label: "Find References In Scene", off: true },
    { label: "Select Dependencies" },
  ],
  [{ label: "Refresh", keys: "Ctrl+R" }, { label: "Reimport" }],
  [{ label: "Reimport All" }],
  [{ label: "Extract From Prefab", off: true }],
  [{ label: "Update UXML Schema" }],
  [{ label: "Seed XR Input Bindings" }, { label: "Open C# Project" }, { label: "View in Import Activity Window" }],
  [{ label: "Properties...", keys: "Alt+P" }],
];

const createMenu: Item[][] = [
  [{ label: "Folder" }],
  [
    { label: "C# Script", marked: "-ml-2.5 px-2.5" },
    { label: "2D", sub: true },
    { label: "Visual Scripting", sub: true },
    { label: "Shader", sub: true },
    { label: "Shader Variant Collection" },
    { label: "Testing", sub: true },
    { label: "Playables", sub: true },
    { label: "Assembly Definition" },
    { label: "Assembly Definition Reference" },
  ],
  [{ label: "Text", sub: true }, { label: "TextMeshPro", sub: true }],
  [
    { label: "Scene" },
    { label: "Scene Template" },
    { label: "Scene Template From Scene", off: true },
    { label: "Scene Template Pipeline" },
    { label: "Prefab" },
    { label: "Prefab Variant", off: true },
  ],
  [{ label: "Audio Mixer" }],
  [
    { label: "Material" },
    { label: "Lens Flare" },
    { label: "Render Texture" },
    { label: "Lightmap Parameters" },
    { label: "Lighting Settings" },
    { label: "Custom Render Texture" },
  ],
  [{ label: "Animator Controller" }, { label: "Animation" }, { label: "Animator Override Controller" }, { label: "Avatar Mask" }],
  [{ label: "Timeline" }, { label: "Signal" }],
  [{ label: "Physic Material" }],
  [{ label: "GUI Skin" }, { label: "Custom Font" }],
  [{ label: "Legacy", sub: true }, { label: "UI Toolkit", sub: true }],
  [{ label: "Search", sub: true }],
];

function Menu({ label, groups, className }: { label: string; groups: Item[][]; className: string }) {
  return (
    <div
      role="menu"
      aria-label={label}
      className={clsx("absolute rounded-lg border-2 border-[#e4e4e4] bg-[#f9f9f9] px-[7px] py-px font-['Open_Sans',sans-serif] text-[23px] text-black shadow-[0_8px_24px_rgba(0,0,0,0.22)]", className)}
    >
      {groups.map((items, g) => (
        <React.Fragment key={g}>
          {g > 0 && <div role="separator" className="mx-1.5 my-1.5 h-px bg-[#d4d4d4]" />}
          {items.map((it) => (
            <button
              key={it.label}
              role="menuitem"
              disabled={it.off}
              className={clsx("flex h-11 w-full items-center rounded-md pr-5 pl-[60px] text-left disabled:text-[#a0a0a0]", it.marked && "bg-[#efefef]")}
            >
              <span className="grow pt-1">
                {it.marked ? <mark className={clsx("inline-block h-[25px] bg-[#f3e600] leading-[23px] text-black", it.marked)}>{it.label}</mark> : it.label}
              </span>
              {it.keys && <span className="pt-1 pr-[18px]">{it.keys}</span>}
              {it.sub && (
                <Icon w={9} h={16} className="text-[#1a1a1a]">
                  <path d="M1 1L8 8L1 15" />
                </Icon>
              )}
            </button>
          ))}
        </React.Fragment>
      ))}
    </div>
  );
}

/* ---------- window ---------- */

function TopBar() {
  return (
    <header className="flex h-[60px] shrink-0 items-center px-3.5">
      <div className="flex gap-2">
        <button className="flex h-[38px] w-[127px] items-center rounded-sm bg-[#383838] pl-2.5 text-2xl">
          <Icon w={24} h={24}>
            <path d="M12 0A12 12 0 1 0 12 24A12 12 0 1 0 12 0ZM12 4A4.500 4.500 0 1 1 12 13A4.500 4.500 0 1 1 12 4ZM5 18Q12 11 19 18Q12 24.500 5 18Z" fill="currentColor" fillRule="evenodd" stroke="none" />
          </Icon>
          <span className="mr-3.5 ml-4">MM</span>
          <Caret className="w-3.5" />
        </button>
        <button aria-label="Cloud" className="flex h-[38px] w-[62px] items-center justify-center rounded-sm bg-[#383838]">
          <Icon w={28} h={20}>
            <path d="M6 20A6 6 0 0 1 2 8Q4 5 7 6.500Q9 0 15 0Q21 1 21.500 7.500Q28 8 28 14Q27.500 20 22 20Z" fill="currentColor" stroke="none" />
          </Icon>
        </button>
      </div>
      <div className="flex-[1616]" />
      <div className="flex gap-0.5">
        <button aria-label="Play" className="flex h-9 w-[62px] items-center justify-center rounded-l-sm bg-[#383838] pr-1">
          <Icon w={16} h={20}><path d="M0 0L16 10L0 20Z" fill="currentColor" stroke="none" /></Icon>
        </button>
        <button aria-label="Pause" className="flex h-9 w-[62px] items-center justify-center bg-[#383838]">
          <Icon w={16} h={20}><path d="M3 0V20M13 0V20" strokeWidth={5.500} /></Icon>
        </button>
        <button aria-label="Step" className="flex h-9 w-[62px] items-center justify-center rounded-r-sm bg-[#2a2a2a] text-[#9a9a9a]">
          <Icon w={20} h={20}><path d="M0 0L14 10L0 20Z" fill="currentColor" stroke="none" /><path d="M18 0V20" strokeWidth={3} /></Icon>
        </button>
      </div>
      <div className="flex-[917]" />
    </header>
  );
}

export default function App() {
  return (
    <div className="relative flex h-screen w-full flex-col overflow-hidden border-t border-l-4 border-t-[#e6efec] border-l-white bg-[#191919] pb-[3px] font-['Inter',sans-serif] text-[#c4c4c4]">
      <TopBar />
      <div className="flex min-h-0 grow gap-1">
        <div className="flex min-w-0 grow flex-col gap-1">
          <div className="flex min-h-0 flex-[1338_1_0px] gap-1">
            <Hierarchy />
            <Scene />
          </div>
          <Project />
        </div>
        <aside className="flex w-[7px] shrink-0 flex-col">
          <div className="h-[146px] rounded-tl-md bg-[#3c3c3c]" />
          <div className="mt-0.5 grow bg-[#383838]" />
          <div className="mt-0.5 h-10 bg-[#3c3c3c]" />
          <div className="mt-0.5 h-[98px] bg-[#383838]" />
        </aside>
      </div>
      <Menu label="Asset actions" groups={assetMenu} className="top-[715px] left-[534px] w-[609px]" />
      <Menu label="Create" groups={createMenu} className="top-[407px] left-[1137px] w-[488px]" />
    </div>
  );
}
